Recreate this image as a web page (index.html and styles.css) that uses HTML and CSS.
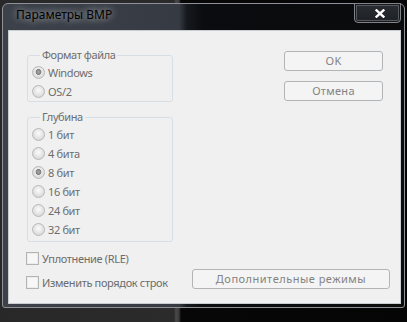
FILE: index.html
```html
<!DOCTYPE html>
<html lang="ru">
<head>
<meta charset="utf-8">
<title>Параметры BMP</title>
<link rel="stylesheet" href="styles.css">
</head>
<body>
<div class="window">
  <div class="titlebar">
    <span class="title">Параметры BMP</span>
    <div class="close">
      <svg width="10" height="9" viewBox="0 0 10 9"><path d="M1.6 1.4 L8.4 7.6 M8.4 1.4 L1.6 7.6" stroke="#fff" stroke-width="2.4" stroke-linecap="square" fill="none"/></svg>
    </div>
  </div>
  <div class="client">
    <div class="top">
      <div class="groups">
        <fieldset class="group">
          <legend>Формат файла</legend>
          <label class="opt"><span class="radio on"></span>Windows</label>
          <label class="opt"><span class="radio"></span>OS/2</label>
        </fieldset>
        <fieldset class="group g2">
          <legend>Глубина</legend>
          <label class="opt"><span class="radio"></span>1 бит</label>
          <label class="opt"><span class="radio"></span>4 бита</label>
          <label class="opt"><span class="radio on"></span>8 бит</label>
          <label class="opt"><span class="radio"></span>16 бит</label>
          <label class="opt"><span class="radio"></span>24 бит</label>
          <label class="opt"><span class="radio"></span>32 бит</label>
        </fieldset>
      </div>
      <div class="buttons">
        <button class="btn">OK</button>
        <button class="btn">Отмена</button>
      </div>
    </div>
    <div class="checks">
      <label class="opt"><span class="check"></span>Уплотнение (RLE)</label>
      <div class="row2">
        <label class="opt lbl2"><span class="check"></span>Изменить порядок строк</label>
        <button class="btn wide">Дополнительные режимы</button>
      </div>
    </div>
  </div>
</div>
</body>
</html>
```
FILE: styles.css
```css
html, body {
  margin: 0;
  padding: 0;
}
body {
  width: 407px;
  height: 322px;
  overflow: hidden;
  background: linear-gradient(to right, #282828 0, #2b2b2b 174px, #4a4a4a 176px, #3a3a3a 179px, #070707 181px, #050505 100%);
  font-family: "Noto Sans", "DejaVu Sans", sans-serif;
  font-size: 11px;
}
.window {
  box-sizing: border-box;
  width: 403px;
  height: 305px;
  margin: 3px 0 0 2px;
  border: 1px solid #8e9298;
  border-radius: 6px 6px 3px 3px;
  padding: 0 3px 3px 5px;
  background: linear-gradient(to right, #3d424a 0, #363b43 176px, #15191d 184px, #0a0c0f 200px, #0b0b0c 100%);
  display: flex;
  flex-direction: column;
}
.titlebar {
  height: 26px;
  flex: none;
  display: flex;
  justify-content: space-between;
  align-items: flex-start;
}
.title {
  padding: 3px 0 0 8px;
  line-height: 16px;
  font-size: 12px;
  color: #000;
  text-shadow: 0 0 6px rgba(255,255,255,0.45), 0 0 10px rgba(255,255,255,0.35), 0 0 14px rgba(255,255,255,0.25);
}
.close {
  box-sizing: border-box;
  width: 47px;
  height: 20px;
  margin-top: -1px;
  border: 1px solid #80848a;
  border-radius: 0 0 4px 4px;
  box-shadow: inset 0 0 0 1px #16181b, inset 0 0 0 2px #55595e;
  background: linear-gradient(#2a2d31, #1d2024);
  display: flex;
  align-items: center;
  justify-content: center;
  padding-left: 4px;
}
.close svg {
  display: block;
}
.client {
  box-sizing: border-box;
  flex: none;
  height: 274px;
  border: 1px solid #c8cdd2;
  background: #f0f0f0;
  padding: 16px 10px 0 17px;
  display: flex;
  flex-direction: column;
}
.top {
  display: flex;
  justify-content: space-between;
  align-items: flex-start;
}
.groups {
  margin-left: 1px;
  width: 146px;
  display: flex;
  flex-direction: column;
  gap: 7px;
}
.group {
  margin: 0;
  padding: 0 0 0 4px;
  border: 1px solid #d5dfe5;
  border-radius: 3px;
  min-width: 0;
}
.g2 {
  padding-bottom: 2px;
}
.group legend {
  margin-left: 8px;
  padding: 0 2px;
  line-height: 16px;
  color: #6d6d6d;
  letter-spacing: -0.4px;
}
.opt {
  display: flex;
  align-items: center;
  gap: 3px;
  height: 19px;
  color: #6d6d6d;
  white-space: nowrap;
  letter-spacing: -0.35px;
}
.radio {
  box-sizing: border-box;
  width: 13px;
  height: 13px;
  flex: none;
  border-radius: 50%;
  border: 1px solid #b8b8b8;
  background: radial-gradient(circle at 50% 40%, #fbfbfb 0, #ececec 3px, #dcdcdc 6px);
}
.radio.on {
  background:
    radial-gradient(circle at 50% 45%, #a8a8a8 0, #8a8a8a 2px, #7c7c7c 2.6px, transparent 3.2px),
    radial-gradient(circle at 50% 40%, #fbfbfb 0, #ececec 3px, #dcdcdc 6px);
}
.buttons {
  display: flex;
  flex-direction: column;
  gap: 10px;
  margin: 4px 7px 0 0;
}
.btn {
  box-sizing: border-box;
  width: 99px;
  height: 20px;
  border: 1px solid #b1b5b8;
  border-radius: 3px;
  background: #f4f4f4;
  color: #838383;
  font: inherit;
  letter-spacing: 0.3px;
  line-height: 18px;
  padding: 0;
}
.checks {
  margin-top: 7px;
  display: flex;
  flex-direction: column;
}
.check {
  box-sizing: border-box;
  width: 13px;
  height: 13px;
  flex: none;
  border: 1px solid #b4b4b4;
  background: #f7f7f7;
  box-shadow: inset 0 0 0 1px #ececec;
}
.row2 {
  margin-top: 1px;
  display: flex;
  align-items: flex-start;
}
.lbl2 {
  margin-top: 4px;
}
.btn.wide {
  width: 198px;
  margin-left: auto;
  letter-spacing: 0.5px;
}
```
